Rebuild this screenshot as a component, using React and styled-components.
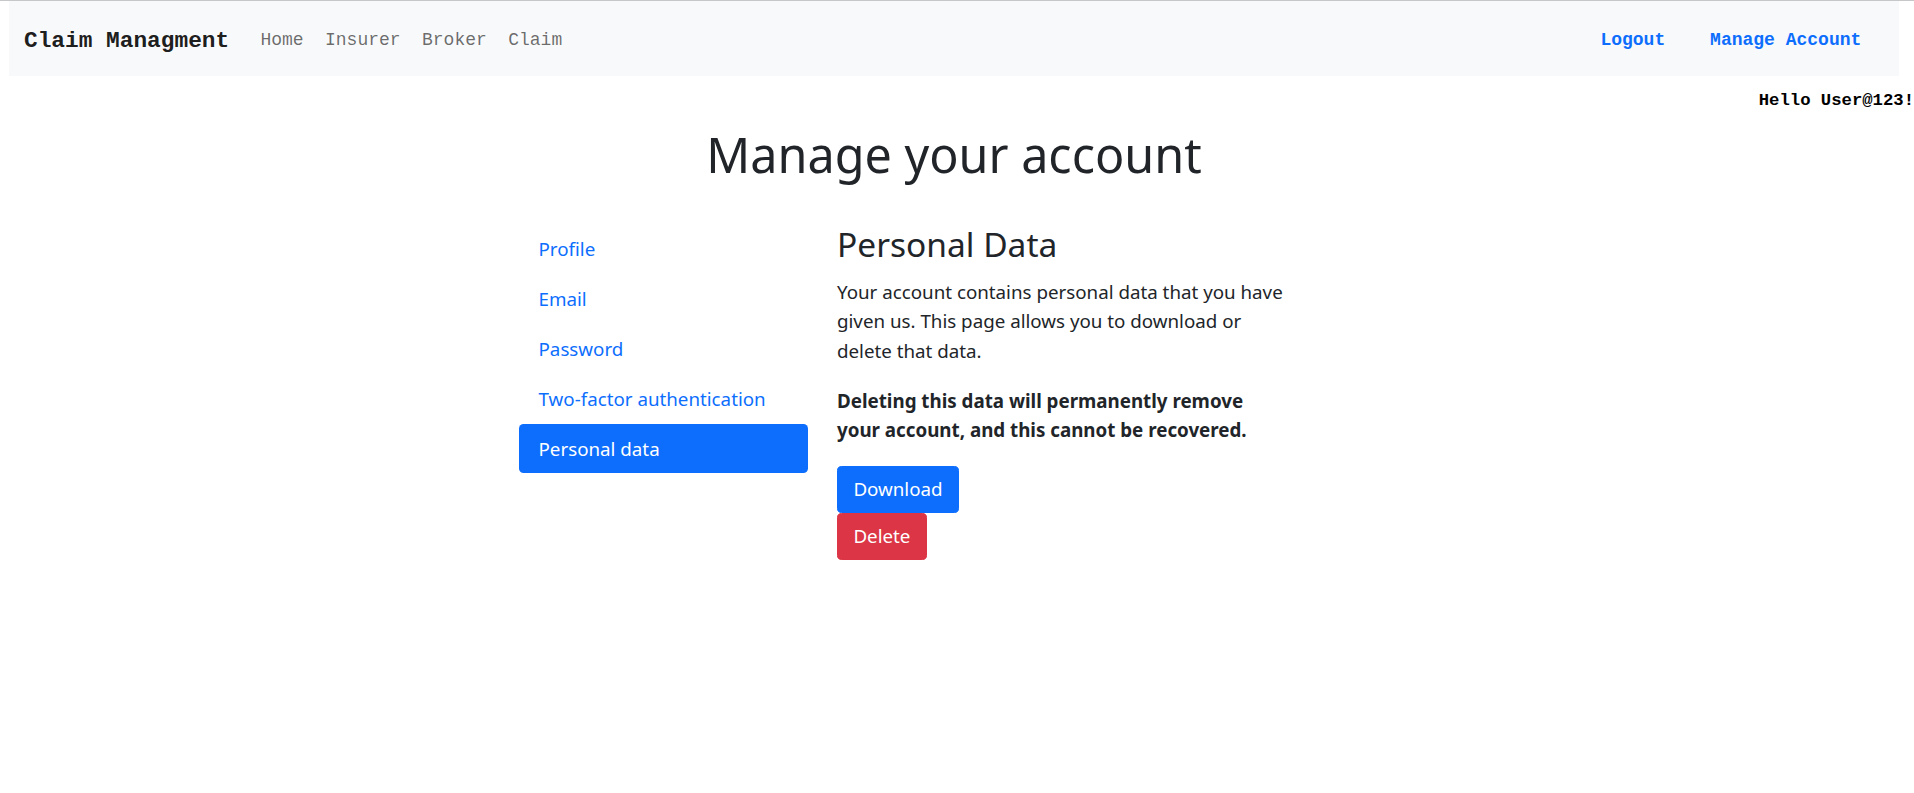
import React from "react";
import styled, { createGlobalStyle } from "styled-components";

const GlobalStyle = createGlobalStyle`
  html { font-size: 18.75px; }
  body {
    margin: 0;
    overflow: hidden;
    border-top: 1px solid #c6c7c8;
    background: #fff;
    color: #212529;
    font-family: "Noto Sans", "Open Sans", sans-serif;
  }
  * { box-sizing: border-box; }
`;

const Navbar = styled.nav`
  display: flex;
  align-items: center;
  height: 75px;
  margin: 0 15px 0 9px;
  padding: 4px 27px 0 15px;
  background: #f8f9fa;
  font-family: "Liberation Mono", monospace;
`;

const Brand = styled.a`
  font-size: 22.8px;
  font-weight: 700;
  color: rgba(0, 0, 0, 0.9);
  margin-right: 20.5px;
  white-space: nowrap;
`;

const NavList = styled.div`
  display: flex;
  align-items: center;
  margin-left: ${(p) => (p.$right ? "auto" : "0")};
  gap: ${(p) => (p.$right ? "23.5px" : "0")};
`;

const NavLink = styled.a`
  padding: 0 10.7px;
  font-size: 18px;
  line-height: 29px;
  font-weight: ${(p) => (p.$strong ? 700 : 400)};
  color: ${(p) => (p.$strong ? "#0d6efd" : "rgba(0, 0, 0, 0.58)")};
  white-space: nowrap;
`;

const HelloRow = styled.div`
  display: flex;
  justify-content: flex-end;
  margin-top: 10px;
  height: 29px;
  line-height: 29px;
`;

const Hello = styled.span`
  font-family: "Liberation Mono", monospace;
  font-weight: 700;
  font-size: 17.25px;
  color: #000;
  white-space: nowrap;
`;

const Page = styled.div`
  margin: 0 15px 0 9px;
`;

const Main = styled.main`
  width: 900px;
  margin: 0 auto;
`;

const Title = styled.h1`
  margin: 9.5px 0 41px;
  text-align: center;
  font-size: 48.5px;
  font-weight: 400;
  line-height: 58.6px;
`;

const Row = styled.div`
  display: flex;
  align-items: flex-start;
  gap: 29px;
  padding-left: 15px;
`;

const SideNav = styled.ul`
  list-style: none;
  margin: 0;
  padding: 0;
  width: 289px;
  display: flex;
  flex-direction: column;
  gap: 1.2px;
`;

const SideItem = styled.li`
  padding: 9.76px 19.52px;
  line-height: 29.28px;
  font-size: 1rem;
  border-radius: 4.6px;
  color: ${(p) => (p.$active ? "#fff" : "#0d6efd")};
  background: ${(p) => (p.$active ? "#0d6efd" : "transparent")};
`;

const Content = styled.section`
  width: 452px;
`;

const SubTitle = styled.h3`
  margin: 0 0 12px;
  font-size: 33.5px;
  font-weight: 400;
  line-height: 41px;
`;

const Para = styled.p`
  margin: 0 0 21px;
  font-size: 1rem;
  line-height: 29.28px;
  font-weight: ${(p) => (p.$bold ? 700 : 400)};
`;

const Button = styled.button`
  display: block;
  font-family: inherit;
  font-size: 1rem;
  line-height: 29.28px;
  padding: 7.9px 15.4px;
  border: 1.2px solid ${(p) => p.$color};
  background: ${(p) => p.$color};
  color: #fff;
  border-radius: 4.6px;
`;

export default function App() {
  return (
    <>
      <GlobalStyle />
      <Navbar>
        <Brand>Claim Managment</Brand>
        <NavList>
          <NavLink>Home</NavLink>
          <NavLink>Insurer</NavLink>
          <NavLink>Broker</NavLink>
          <NavLink>Claim</NavLink>
        </NavList>
        <NavList $right>
          <NavLink $strong>Logout</NavLink>
          <NavLink $strong>Manage Account</NavLink>
        </NavList>
      </Navbar>
      <HelloRow>
        <Hello>Hello User@123!</Hello>
      </HelloRow>
      <Page>
        <Main>
          <Title>Manage your account</Title>
          <Row>
            <SideNav>
              <SideItem>Profile</SideItem>
              <SideItem>Email</SideItem>
              <SideItem>Password</SideItem>
              <SideItem>Two-factor authentication</SideItem>
              <SideItem $active>Personal data</SideItem>
            </SideNav>
            <Content>
              <SubTitle>Personal Data</SubTitle>
              <Para>
                Your account contains personal data that you have given us. This page allows you to download or delete that data.
              </Para>
              <Para $bold>
                Deleting this data will permanently remove your account, and this cannot be recovered.
              </Para>
              <Button $color="#0d6efd">Download</Button>
              <Button $color="#dc3545">Delete</Button>
            </Content>
          </Row>
        </Main>
      </Page>
    </>
  );
}
